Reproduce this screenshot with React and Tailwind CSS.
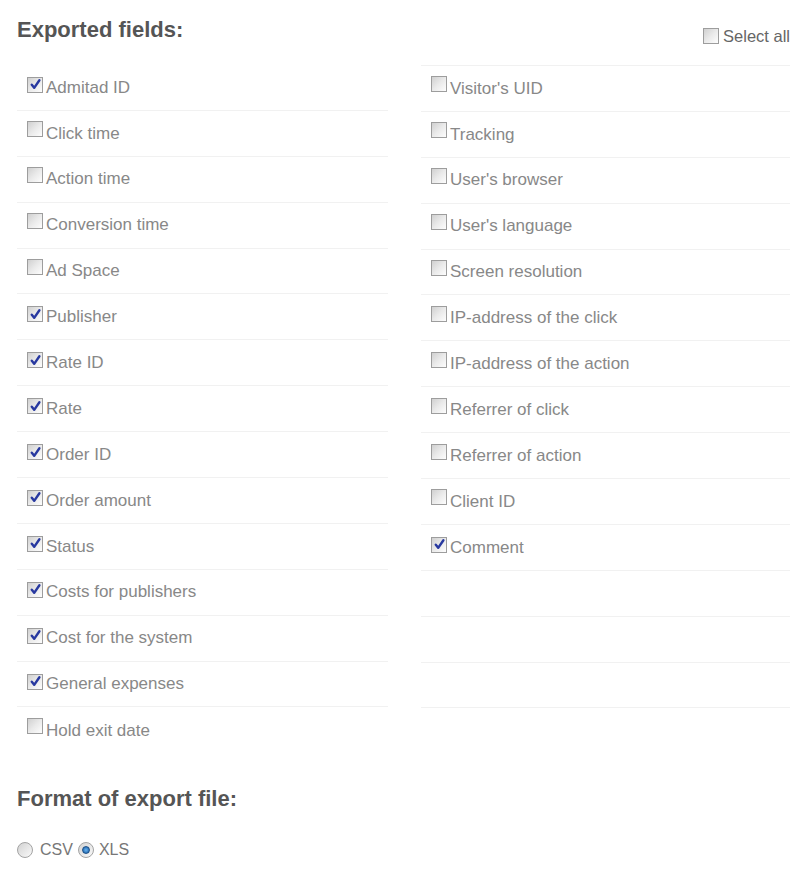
import React, { useState } from 'react';

const LEFT_FIELDS = [
  ['Admitad ID', true],
  ['Click time', false],
  ['Action time', false],
  ['Conversion time', false],
  ['Ad Space', false],
  ['Publisher', true],
  ['Rate ID', true],
  ['Rate', true],
  ['Order ID', true],
  ['Order amount', true],
  ['Status', true],
  ['Costs for publishers', true],
  ['Cost for the system', true],
  ['General expenses', true],
  ['Hold exit date', false],
];

const RIGHT_FIELDS = [
  ["Visitor's UID", false],
  ['Tracking', false],
  ["User's browser", false],
  ["User's language", false],
  ['Screen resolution', false],
  ['IP-address of the click', false],
  ['IP-address of the action', false],
  ['Referrer of click', false],
  ['Referrer of action', false],
  ['Client ID', false],
  ['Comment', true],
];

const Checkbox = ({ checked, onClick }) => (
  <span
    onClick={onClick}
    className="inline-flex h-[16px] w-[16px] shrink-0 cursor-pointer items-center justify-center border border-[#9d9d9d] bg-linear-to-br from-[#d0d0d0] via-[#eaeaea] to-[#fdfdfd]"
  >
    {checked && (
      <svg viewBox="0 0 14 14" className="h-[13px] w-[13px]">
        <path d="M3 7.2 L5.6 10.6 L11.2 2.4" stroke="#2839a0" strokeWidth="2.6" fill="none" strokeLinecap="round" strokeLinejoin="round" />
      </svg>
    )}
  </span>
);

const Radio = ({ checked, onClick }) => (
  <span
    onClick={onClick}
    className="inline-flex h-[16px] w-[16px] shrink-0 cursor-pointer items-center justify-center rounded-full border border-[#a3a3a3] bg-linear-to-br from-[#d2d2d2] to-[#fafafa]"
  >
    {checked && (
      <span className="h-[8px] w-[8px] rounded-full border border-[#1d4f86] bg-radial from-[#6ab4f0] to-[#0b5aa3]" />
    )}
  </span>
);

const Row = ({ label, checked, onToggle, last }) => (
  <div className={`flex h-[45.9px] items-center gap-[3px] pl-[10px] ${last ? '' : 'border-b border-[#f1f1f1]'}`}>
    {label != null && (
      <>
        <span className="mb-[2px]">
          <Checkbox checked={checked} onClick={onToggle} />
        </span>
        <span className="text-[17px] text-[#888]">{label}</span>
      </>
    )}
  </div>
);

export default function App() {
  const [left, setLeft] = useState(LEFT_FIELDS.map((f) => f[1]));
  const [right, setRight] = useState(RIGHT_FIELDS.map((f) => f[1]));
  const [format, setFormat] = useState('xls');

  const allChecked = left.every(Boolean) && right.every(Boolean);
  const toggleAll = () => {
    const v = !allChecked;
    setLeft(left.map(() => v));
    setRight(right.map(() => v));
  };

  return (
    <div className="min-h-[873px] bg-white pl-[17px] pr-[9px] font-['Liberation_Sans',Arial,sans-serif]">
      <div className="grid grid-cols-[371px_369px] gap-x-[33px]">
        {/* Left column */}
        <div>
          <div className="h-[65px] pt-[18px]">
            <h2 className="text-[22px] font-bold leading-[24px] text-[#555]">Exported fields:</h2>
          </div>
          {LEFT_FIELDS.map(([label], i) => (
            <Row
              key={label}
              label={label}
              checked={left[i]}
              last={i === LEFT_FIELDS.length - 1}
              onToggle={() => setLeft(left.map((v, j) => (j === i ? !v : v)))}
            />
          ))}
        </div>

        {/* Right column */}
        <div>
          <div className="flex h-[66px] items-start justify-end gap-[4px] border-b border-[#f1f1f1] pt-[28px]">
            <Checkbox checked={allChecked} onClick={toggleAll} />
            <span className="text-[16.5px] leading-[16px] text-[#666]">Select all</span>
          </div>
          {RIGHT_FIELDS.map(([label], i) => (
            <Row
              key={label}
              label={label}
              checked={right[i]}
              onToggle={() => setRight(right.map((v, j) => (j === i ? !v : v)))}
            />
          ))}
          <Row />
          <Row />
          <Row />
        </div>
      </div>

      {/* Format */}
      <h2 className="mt-[34px] text-[22px] font-bold leading-[24px] text-[#555]">Format of export file:</h2>
      <div className="mt-[29px] flex h-[20px] items-center text-[16px] text-[#777]">
        <Radio checked={format === 'csv'} onClick={() => setFormat('csv')} />
        <span className="ml-[7px] mr-[5px]">CSV</span>
        <Radio checked={format === 'xls'} onClick={() => setFormat('xls')} />
        <span className="ml-[5px]">XLS</span>
      </div>
    </div>
  );
}
